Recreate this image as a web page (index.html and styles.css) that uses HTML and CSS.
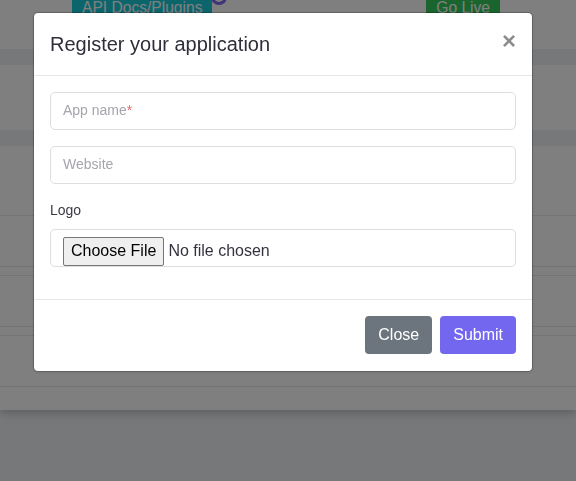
FILE: index.html
```html
<!DOCTYPE html>
<html lang="en">
<head>
<meta charset="utf-8">
<title>Register your application</title>
<link rel="stylesheet" href="styles.css">
</head>
<body>
<div class="page">
  <header class="topbar">
    <a class="btn-top btn-info">API Docs/Plugins<span class="badge-dot"></span></a>
    <a class="btn-top btn-live">Go Live</a>
  </header>
  <div class="band"></div>
  <div class="section"></div>
  <div class="band"></div>
  <div class="rows">
    <div class="row r-tall"></div>
    <div class="row r-mid"></div>
    <div class="row r-thin"></div>
    <div class="row r-mid"></div>
    <div class="row r-thin"></div>
    <div class="row r-mid"></div>
    <div class="row r-end"></div>
  </div>
</div>
<div class="backdrop"></div>
<div class="modal">
  <div class="dialog">
    <div class="modal-header">
      <h5 class="modal-title">Register your application</h5>
      <button class="close" type="button">&times;</button>
    </div>
    <div class="modal-body">
      <div class="group field">
        <input class="control" type="text" aria-label="App name">
        <span class="ph">App name<span class="req">*</span></span>
      </div>
      <div class="group">
        <input class="control" type="text" placeholder="Website">
      </div>
      <div class="group">
        <label class="label">Logo</label>
        <input class="control file" type="file">
      </div>
    </div>
    <div class="modal-footer">
      <button class="btn btn-secondary" type="button">Close</button>
      <button class="btn btn-primary" type="button">Submit</button>
    </div>
  </div>
</div>
</body>
</html>
```
FILE: styles.css
```css
html, body {
  margin: 0;
  height: 481px;
  overflow: hidden;
}
body {
  background: #eef0f4;
  font-family: "Liberation Sans", Arial, sans-serif;
}
.page {
  background: #fff;
  height: 410px;
  box-shadow: 0 3px 8px rgba(0, 0, 0, 0.22);
  position: relative;
}
.topbar {
  height: 49px;
  box-sizing: border-box;
  display: flex;
  align-items: flex-start;
  padding: 0 76px 0 72px;
}
.btn-top {
  position: relative;
  margin-top: -10px;
  padding: 6px 10px;
  font-size: 15.6px;
  line-height: 24px;
  color: #fff;
}
.btn-info { background: #1acad8; }
.btn-live { background: #34c85c; margin-left: auto; }
.badge-dot {
  position: absolute;
  right: -15px;
  top: -1px;
  width: 10px;
  height: 10px;
  border: 3px solid #7a6af0;
  border-radius: 50%;
  background: #ffffff;
}
.band { height: 16px; background: #eef0f2; }
.section { height: 65px; }
.row { border-bottom: 1px solid #e8e8e8; }
.r-tall { height: 69px; }
.r-mid { height: 50px; }
.r-thin { height: 8px; }
.r-end { height: 23px; border-bottom: 0; }

.backdrop {
  position: fixed;
  inset: 0;
  background: rgba(0, 0, 0, 0.5);
}
.modal {
  position: fixed;
  inset: 0;
  display: flex;
  justify-content: center;
  align-items: flex-start;
  padding-right: 10px;
}
.dialog {
  width: 500px;
  margin-top: 12px;
  box-sizing: border-box;
  background: #fff;
  background-clip: padding-box;
  border: 1px solid rgba(0, 0, 0, 0.2);
  border-radius: 5px;
  box-shadow: 0 1px 3px rgba(0, 0, 0, 0.08);
}
.modal-header {
  display: flex;
  align-items: flex-start;
  justify-content: space-between;
  padding: 16px;
  border-bottom: 1px solid #e7e7ea;
}
.modal-title {
  margin: 0;
  font-size: 20px;
  line-height: 30px;
  font-weight: 400;
  color: #2f2f3b;
}
.close {
  margin: -16px -16px -16px auto;
  padding: 16px;
  background: none;
  border: 0;
  font-family: "Liberation Sans", Arial, sans-serif;
  font-size: 24px;
  font-weight: 700;
  line-height: 1;
  color: #000;
  opacity: 0.45;
}
.modal-body { padding: 16px; }
.group { margin-bottom: 16px; }
.field { position: relative; }
.control {
  display: block;
  width: 100%;
  height: 38px;
  box-sizing: border-box;
  margin: 0;
  border: 1px solid #dedde2;
  border-radius: 5px;
  padding: 0 12px 2px;
  font-family: "Liberation Sans", Arial, sans-serif;
  font-size: 14px;
  color: #444;
  background: #fff;
}
.control::placeholder { color: #a5a5ad; }
.ph {
  position: absolute;
  left: 13px;
  top: -1px;
  line-height: 38px;
  font-size: 14px;
  color: #a5a5ad;
  pointer-events: none;
}
.req { color: #e06c6c; }
.label {
  display: block;
  font-size: 14px;
  line-height: 21px;
  margin-bottom: 8px;
  color: #3a3a44;
}
.file {
  font-size: 16px;
  padding: 6px 12px 0 12px;
  line-height: 29px;
  color: #33333f;
}
.file::file-selector-button {
  font-family: "Liberation Sans", Arial, sans-serif;
  font-size: 16px;
  height: 29px;
  padding: 0 7px;
  margin: 0 4px 0 0;
  border: 1px solid #767676;
  border-radius: 2px;
  background: #efefef;
  color: #000;
}
.modal-footer {
  display: flex;
  justify-content: flex-end;
  padding: 12px 12px 13px;
  border-top: 1px solid #e7e7ea;
}
.btn {
  margin: 4px;
  padding: 6px 12px;
  font-family: "Liberation Sans", Arial, sans-serif;
  font-size: 16px;
  line-height: 24px;
  border: 1px solid transparent;
  border-radius: 4px;
  color: #fff;
}
.btn-secondary { background: #6c757d; }
.btn-primary { background: #7367f0; }
```
